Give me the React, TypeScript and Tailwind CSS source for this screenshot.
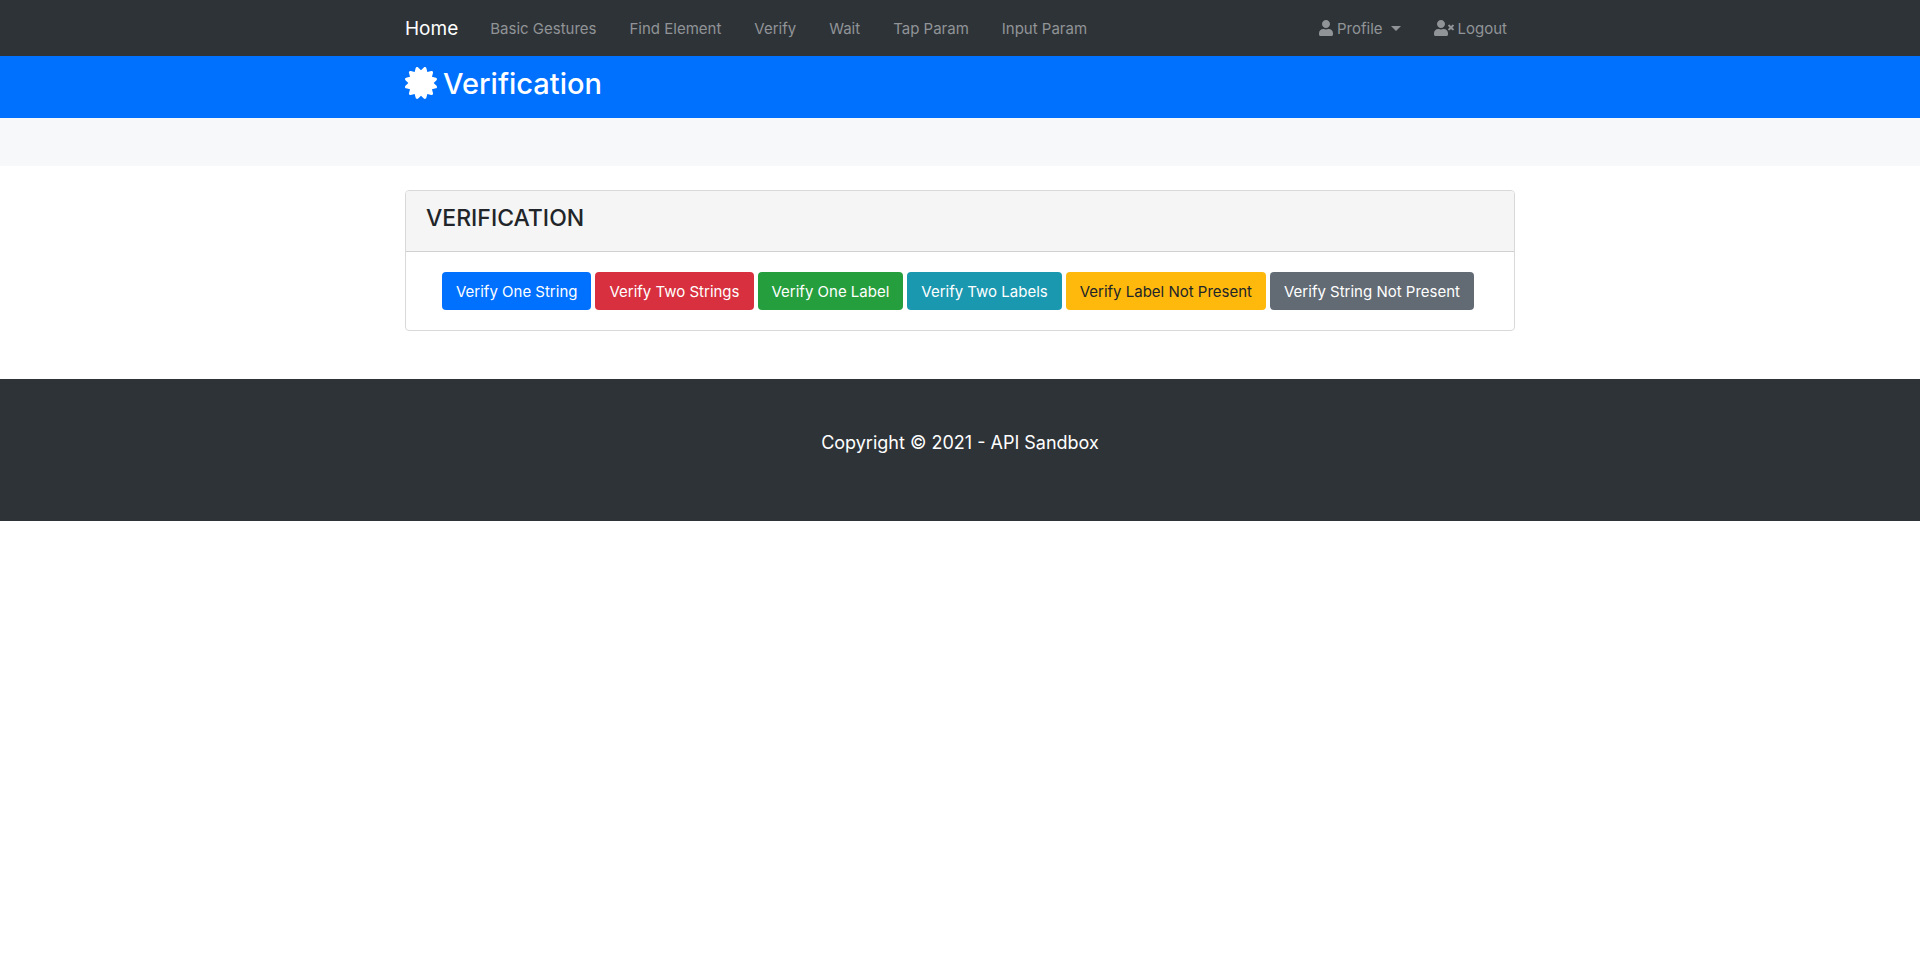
import { FaCertificate, FaUser, FaUserTimes } from "react-icons/fa";

const links = ["Basic Gestures", "Find Element", "Verify", "Wait", "Tap Param", "Input Param"];

const actions = [
  { label: "Verify One String", style: "bg-[#0070ff] text-white" },
  { label: "Verify Two Strings", style: "bg-[#d8303e] text-white" },
  { label: "Verify One Label", style: "bg-[#259e3e] text-white" },
  { label: "Verify Two Labels", style: "bg-[#1a98b0] text-white" },
  { label: "Verify Label Not Present", style: "bg-[#ffb90c] text-[#212529]" },
  { label: "Verify String Not Present", style: "bg-[#626a73] text-white" },
];

export default function App() {
  return (
    <div className="bg-white font-['Inter',sans-serif] text-[15px] leading-6 text-[#212529]">
      <nav className="bg-[#2e3338] text-[#919497]">
        <div className="mx-auto flex h-14 max-w-[1110px] items-center pt-0.5">
          <a href="#" className="mr-8 text-[19px] text-white">Home</a>
          <ul className="flex gap-[33px]">
            {links.map((link) => (
              <li key={link}>
                <a href="#">{link}</a>
              </li>
            ))}
          </ul>
          <ul className="ml-auto flex gap-[33px] pr-2">
            <li>
              <a href="#" className="flex items-center gap-1">
                <FaUser className="mb-0.5 h-4 w-3.5" />
                Profile
                <span className="mb-0.5 ml-1 border-x-5 border-t-5 border-x-transparent border-t-current" />
              </a>
            </li>
            <li>
              <a href="#" className="flex items-center gap-1">
                <FaUserTimes className="mb-0.5 h-4 w-5" />
                Logout
              </a>
            </li>
          </ul>
        </div>
      </nav>

      <header className="bg-[#0070ff] text-white">
        <div className="mx-auto flex h-[62px] max-w-[1110px] pt-2">
          <h1 className="flex h-10 items-center gap-1.5 text-[29px] font-medium">
            <FaCertificate className="mb-0.5 size-8" />
            Verification
          </h1>
        </div>
      </header>

      <div className="h-12 bg-[#f7f8fa]" />

      <main className="mx-auto max-w-[1110px] pt-6 pb-12">
        <section className="overflow-hidden rounded border border-[#d9d9d9]">
          <div className="border-b border-[#d0d0d0] bg-[#f5f5f5] px-5 pt-[13px] pb-[19px]">
            <h2 className="text-[23px] leading-7 font-medium">VERIFICATION</h2>
          </div>
          <div className="flex flex-wrap justify-center gap-1 py-5 pr-6 pl-5">
            {actions.map(({ label, style }) => (
              <button key={label} type="button" className={`h-[38px] rounded px-3.5 pt-0.5 ${style}`}>
                {label}
              </button>
            ))}
          </div>
        </section>
      </main>

      <footer className="bg-[#2e3338] px-4 pt-[49px] pb-[63px] text-center text-[18px] leading-[30px] text-white">
        <p>Copyright © 2021 - API Sandbox</p>
      </footer>
    </div>
  );
}
